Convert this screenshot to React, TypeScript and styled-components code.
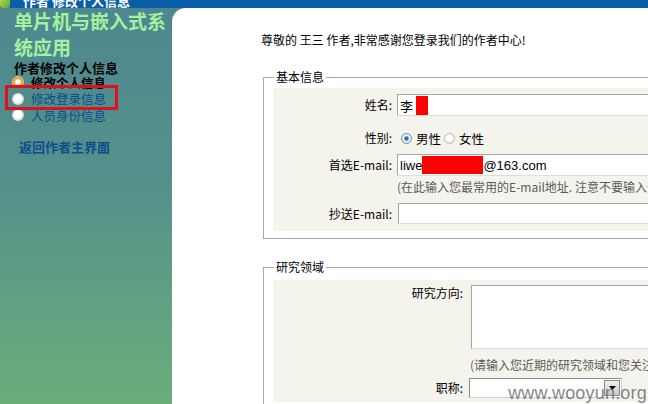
import React from "react";
import styled, { createGlobalStyle } from "styled-components";

const Global = createGlobalStyle`
  html, body { margin: 0; padding: 0; width: 648px; height: 404px; overflow: hidden; background: #fff; }
  body { font-family: "Liberation Sans", "Noto Sans CJK SC", sans-serif; font-size: 12px; color: #000; }
  * { box-sizing: border-box; }
`;

const CJK = `"Noto Sans CJK SC", "Liberation Sans", sans-serif`;

const Page = styled.div`
  position: relative;
  width: 648px;
  height: 404px;
  display: flex;
  flex-direction: column;
  overflow: hidden;
`;

const TopBar = styled.div`
  height: 8px;
  flex: none;
  background: #0b5ea8;
  display: flex;
  align-items: flex-end;
  gap: 13px;
  overflow: hidden;
`;

const TopIcon = styled.span`
  width: 10px;
  height: 14px;
  background: linear-gradient(135deg, #d8e04a, #58a838);
  border-radius: 2px;
  flex: none;
`;

const TopTitle = styled.span`
  font-family: ${CJK};
  font-weight: bold;
  font-size: 13px;
  line-height: 13px;
  color: #fff;
  margin-bottom: 1px;
  white-space: nowrap;
`;

const Body = styled.div`
  flex: 1;
  display: flex;
  background: linear-gradient(180deg, #4e878f 0%, #55918b 45%, #6aae7a 100%);
  min-height: 0;
`;

const Sidebar = styled.aside`
  position: relative;
  width: 172px;
  flex: none;
  padding-left: 14px;
`;

const SiteTitle = styled.div`
  font-family: ${CJK};
  font-weight: bold;
  font-size: 19px;
  line-height: 26px;
  color: #a2f2a0;
  width: 156px;
`;

const SideHeading = styled.div`
  font-family: ${CJK};
  font-weight: bold;
  font-size: 13px;
  line-height: 15px;
  color: #000;
`;

const SideList = styled.div`
  display: flex;
  flex-direction: column;
  margin-top: -1px;
  margin-left: -1px;
`;

const SideItem = styled.div<{ $bold?: boolean }>`
  display: flex;
  align-items: center;
  height: 16.5px;
  gap: 8px;
  font-family: ${CJK};
  font-size: 12.5px;
  line-height: 15px;
  font-weight: ${(p) => (p.$bold ? "bold" : "normal")};
  color: ${(p) => (p.$bold ? "#000" : "#0b4e8c")};
`;

const SideRadio = styled.span<{ $hot?: boolean }>`
  width: 10px;
  height: 10px;
  border-radius: 50%;
  flex: none;
  background: ${(p) =>
    p.$hot
      ? "radial-gradient(circle, #fff 0 30%, #f0b050 45%, #e89a30 100%)"
      : "radial-gradient(circle at 40% 35%, #fff 0 55%, #e6e6e6 100%)"};
  box-shadow: ${(p) => (p.$hot ? "0 0 0 1px #f5c070" : "0 0 0 1px #cfd8d8")};
`;

const Annotation = styled.div`
  position: absolute;
  left: 5px;
  top: 77px;
  width: 113px;
  height: 25px;
  border: 3px solid #e0101c;
`;

const BackLink = styled.div`
  font-family: ${CJK};
  font-weight: bold;
  font-size: 13px;
  line-height: 16px;
  color: #0b4e8c;
  margin-top: 15px;
  margin-left: 5px;
`;

const Main = styled.main`
  flex: 1;
  background: #fff;
  border-top-left-radius: 14px;
  padding: 24px 0 0 89px;
  overflow: hidden;
`;

const Greeting = styled.div`
  font-family: ${CJK};
  font-size: 12px;
  line-height: 16px;
  white-space: nowrap;
`;

const FieldSet = styled.fieldset<{ $top: number; $padTop: number }>`
  margin: ${(p) => p.$top}px 0 0 2px;
  width: 560px;
  border: 1px solid #a8a8a8;
  border-right: none;
  padding: ${(p) => p.$padTop}px 0 7px 9px;
  min-width: 0;
`;

const Legend = styled.legend`
  font-family: ${CJK};
  font-size: 12px;
  line-height: 16px;
  padding: 0 2px;
  margin-left: 1px;
`;

const Panel = styled.div<{ $pb?: number }>`
  background: #f5f4ec;
  display: flex;
  flex-direction: column;
  padding-bottom: ${(p) => p.$pb ?? 0}px;
`;

const Row = styled.div<{ $h?: number; $label: number; $align?: string; $pad?: string }>`
  display: grid;
  grid-template-columns: ${(p) => p.$label}px 1fr;
  align-items: ${(p) => p.$align ?? "center"};
  height: ${(p) => (p.$h ? `${p.$h}px` : "auto")};
  padding: ${(p) => p.$pad ?? "0"};
`;

const Label = styled.label<{ $pr: number; $pt?: number }>`
  font-family: ${CJK};
  font-size: 12px;
  line-height: 16px;
  text-align: right;
  padding-right: ${(p) => p.$pr}px;
  padding-top: ${(p) => p.$pt ?? 0}px;
  white-space: nowrap;
`;

const TextBox = styled.div<{ $h: number; $w: number; $ml?: number }>`
  height: ${(p) => p.$h}px;
  width: ${(p) => p.$w}px;
  margin-left: ${(p) => p.$ml ?? 0}px;
  background: #fff;
  border: 1px solid #a5a5a5;
  border-right-color: #dcdcdc;
  border-bottom-color: #dcdcdc;
  display: flex;
  align-items: center;
  padding-left: 2px;
  font-family: "Liberation Sans", ${CJK};
  font-size: 13px;
  white-space: nowrap;
`;

const Redact = styled.span<{ $w: number; $h: number }>`
  display: inline-block;
  width: ${(p) => p.$w}px;
  height: ${(p) => p.$h}px;
  background: #ff0000;
`;

const NameText = styled.span`
  font-family: ${CJK};
  font-size: 13px;
  margin-right: 3px;
`;

const RadioGroup = styled.div`
  display: flex;
  align-items: center;
  padding-left: 4px;
  font-family: ${CJK};
  font-size: 12.5px;
`;

const RadioDot = styled.span<{ $on?: boolean }>`
  width: 11px;
  height: 11px;
  border-radius: 50%;
  border: 1px solid ${(p) => (p.$on ? "#6c8aa8" : "#b8b8b8")};
  background: ${(p) =>
    p.$on
      ? "radial-gradient(circle, #2a74c0 0 28%, #9cc4e8 36%, #f4f4f4 50%, #dcdcdc 100%)"
      : "radial-gradient(circle at 40% 35%, #ffffff 0 40%, #d8d8d8 100%)"};
  margin-right: 4px;
  flex: none;
`;

const RadioText = styled.span`
  margin-right: 3px;
`;

const Hint = styled.div<{ $ml?: number }>`
  font-family: ${CJK};
  font-size: 12px;
  line-height: 16px;
  color: #5a5a5a;
  white-space: nowrap;
  margin-left: ${(p) => p.$ml ?? 0}px;
`;

const Select = styled.div`
  width: 153px;
  height: 20px;
  background: #fff;
  border: 1px solid #8c8c8c;
  border-right-color: #d0d0d0;
  border-bottom-color: #d0d0d0;
  display: flex;
  justify-content: flex-end;
  padding: 1px;
`;

const SelectButton = styled.span`
  width: 16px;
  height: 100%;
  background: linear-gradient(#f0f0f0, #c8c8c8);
  border: 1px solid #8a8a8a;
  display: flex;
  align-items: center;
  justify-content: center;
`;

const Watermark = styled.div`
  position: absolute;
  right: 1px;
  bottom: 1px;
  font-family: "Liberation Sans", sans-serif;
  font-size: 18px;
  line-height: 20px;
  color: rgba(110, 110, 110, 0.85);
  letter-spacing: 0.2px;
`;

export default function App() {
  return (
    <Page>
      <Global />
      <TopBar>
        <TopIcon />
        <TopTitle>作者 修改个人信息</TopTitle>
      </TopBar>
      <Body>
        <Sidebar>
          <SiteTitle>单片机与嵌入式系统应用</SiteTitle>
          <SideHeading>作者修改个人信息</SideHeading>
          <SideList>
            <SideItem $bold>
              <SideRadio $hot />
              修改个人信息
            </SideItem>
            <SideItem>
              <SideRadio />
              修改登录信息
            </SideItem>
            <SideItem>
              <SideRadio />
              人员身份信息
            </SideItem>
          </SideList>
          <BackLink>返回作者主界面</BackLink>
          <Annotation />
        </Sidebar>
        <Main>
          <Greeting>尊敬的 王三 作者,非常感谢您登录我们的作者中心!</Greeting>
          <FieldSet $top={21} $padTop={3}>
            <Legend>基本信息</Legend>
            <Panel $pb={2}>
              <Row $h={34} $label={124}>
                <Label $pr={5}>姓名:</Label>
                <TextBox $h={22} $w={300}>
                  <NameText>李</NameText>
                  <Redact $w={12} $h={19} />
                </TextBox>
              </Row>
              <Row $h={32} $label={124}>
                <Label $pr={5}>性别:</Label>
                <RadioGroup>
                  <RadioDot $on />
                  <RadioText>男性</RadioText>
                  <RadioDot />
                  <RadioText>女性</RadioText>
                </RadioGroup>
              </Row>
              <Row $h={22} $label={124}>
                <Label $pr={5}>首选E-mail:</Label>
                <TextBox $h={22} $w={300}>
                  liwe
                  <Redact $w={61} $h={18} />
                  @163.com
                </TextBox>
              </Row>
              <Row $h={22} $label={124}>
                <span />
                <Hint>(在此输入您最常用的E-mail地址. 注意不要输入去掉的邮箱地址)</Hint>
              </Row>
              <Row $h={31} $label={124}>
                <Label $pr={5}>抄送E-mail:</Label>
                <TextBox $h={21} $w={300} $ml={1} />
              </Row>
            </Panel>
          </FieldSet>
          <FieldSet $top={20} $padTop={5}>
            <Legend>研究领域</Legend>
            <Panel $pb={4}>
              <Row $label={196} $align="start" $pad="5px 0 0 0">
                <Label $pr={6}>研究方向:</Label>
                <TextBox $h={64} $w={300} $ml={2} />
              </Row>
              <Row $label={196} $pad="8px 0 5px 0">
                <span />
                <Hint $ml={1}>(请输入您近期的研究领域和您关注的方向)</Hint>
              </Row>
              <Row $label={196}>
                <Label $pr={6}>职称:</Label>
                <Select>
                  <SelectButton>
                    <svg width="7" height="4" viewBox="0 0 7 4">
                      <path d="M0 0 L7 0 L3.5 4 Z" fill="#000" />
                    </svg>
                  </SelectButton>
                </Select>
              </Row>
            </Panel>
          </FieldSet>
        </Main>
      </Body>
      <Watermark>www.wooyun.org</Watermark>
    </Page>
  );
}
